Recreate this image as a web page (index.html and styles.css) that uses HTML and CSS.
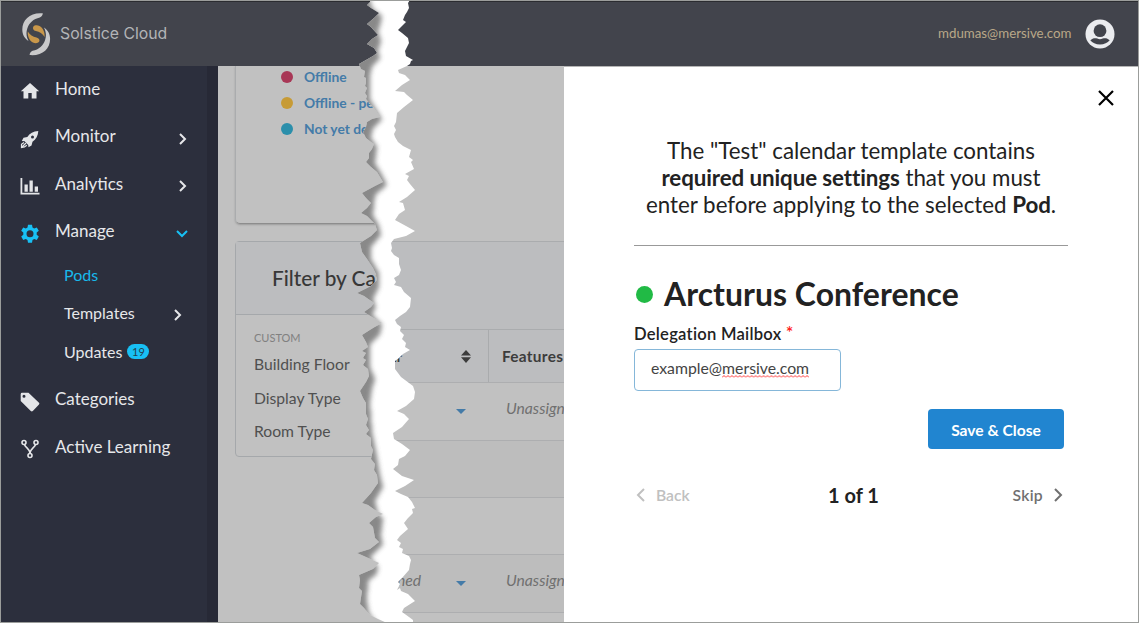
FILE: index.html
```html
<!DOCTYPE html>
<html lang="en">
<head>
<meta charset="utf-8">
<title>Solstice Cloud</title>
<link rel="stylesheet" href="styles.css">
</head>
<body>
<div class="app">
  <header class="topbar">
    <svg class="logo" width="29" height="43" viewBox="0 0 29 43">
      <defs>
        <g id="arm">
          <path d="M20.800.3C8.500-.9.300 6.500.300 16.500c0 5 2.200 9 6.200 11.500C4.300 24 3.900 19.500 5.300 15.500 7 10 11.500 6 17.800 4.600c1.800-.6 3-2.600 3-4.300z" fill="#c9c9ca"/>
          <path d="M5.800 18.500c2 3.300 5 5.200 8.700 5.900 2.600.5 3.600 2.600 2.600 4.300-1 1.500-3.800 1.900-6.200.8C7.500 27.800 5.300 23 5.800 18.500z" fill="#c8974a"/>
        </g>
      </defs>
      <use href="#arm"/>
      <use href="#arm" transform="rotate(180 14.200 21.200)"/>
    </svg>
    <span class="brand">Solstice Cloud</span>
    <span class="user">mdumas@mersive.com</span>
    <svg class="avatar" width="30" height="30" viewBox="0 0 30 30">
      <circle cx="15" cy="15" r="14.500" fill="#ebecef"/>
      <circle cx="15" cy="11.700" r="6.400" fill="#42444c"/>
      <path d="M5.300 21.300c3-3 5.800-2.300 9.700-1 3.900-1.300 6.700-2 9.700 1-2 2.700-5.500 4.200-9.700 4.200s-7.700-1.500-9.700-4.200z" fill="#42444c"/>
    </svg>
  </header>
  <div class="body">
    <nav class="sidebar">
      <a class="item"><svg class="ico" viewBox="0 0 20 20"><path d="M10 2L.8 10.200h2.700V17.500h4.800v-5.500h3.400v5.500h4.800v-7.300h2.700z"/></svg><span>Home</span></a>
      <a class="item"><svg class="ico" viewBox="0 0 20 20"><path fill-rule="evenodd" d="M18.300 2c-5 .2-8.600 2.300-11 6l-3.800.8L1.800 12l2.800.3 3.600 3.600.3 2.300 3-1.700 1-3.700c3.500-2.600 5.600-6 5.800-10.800zM12.500 6.500a1.500 1.500 0 1 1 0 3 1.500 1.500 0 0 1 0-3z"/><path d="M4 13.500l-2.500 1.800V18.500l3-.6 2.300-1.700M2 18l4-4" class="flame"/></svg><span>Monitor</span><svg class="chev" viewBox="0 0 12 12"><path d="M3 1l5 5-5 5"/></svg></a>
      <a class="item"><svg class="ico" viewBox="0 0 20 20"><path d="M.5 2H2.300v14.800H19.500v1.700H.5zM4.500 8.500H7.800V15.800H4.500zM9.500 4.500h3.300V15.800H9.500zM14.700 10.500H18V15.800h-3.300z"/></svg><span>Analytics</span><svg class="chev" viewBox="0 0 12 12"><path d="M3 1l5 5-5 5"/></svg></a>
      <a class="item"><svg class="ico gear" viewBox="0 0 20 20"><path fill-rule="evenodd" d="M8 .7h4l.5 2.700 1.700 1 2.600-1 2 3.400-2.100 1.800v2.200l2.100 1.800-2 3.400-2.600-1-1.700 1-.5 2.700H8l-.5-2.700-1.700-1-2.600 1-2-3.400 2.100-1.800V8.600L1.200 6.800l2-3.400 2.600 1 1.700-1zM10 6.200a3.500 3.500 0 1 0 0 7 3.500 3.500 0 0 0 0-7z"/></svg><span>Manage</span><svg class="chev open" viewBox="0 0 12 12"><path d="M1 3l5 5 5-5"/></svg></a>
      <div class="sub">
        <a class="subitem active"><span>Pods</span></a>
        <a class="subitem"><span>Templates</span><svg class="chev" viewBox="0 0 12 12"><path d="M3 1l5 5-5 5"/></svg></a>
        <a class="subitem"><span>Updates</span><b class="count">19</b></a>
      </div>
      <a class="item"><svg class="ico" viewBox="0 0 20 20"><path fill-rule="evenodd" d="M.7 2.200Q.7.800 2 .800H8.500L19 10.800q.8.800 0 1.600l-6.200 6.700q-1 .8-2 0L.7 9zM4 2.700a1.500 1.500 0 1 0 0 3 1.500 1.500 0 0 0 0-3z"/></svg><span>Categories</span></a>
      <a class="item"><svg class="ico line" viewBox="0 0 20 20"><circle cx="4" cy="3.500" r="2"/><circle cx="16" cy="3.500" r="2"/><circle cx="10" cy="16.500" r="2"/><path d="M4.500 5.500c.8 3.500 5.500 4 5.500 9M15.500 5.500c-.8 3.500-5.500 4-5.500 9"/></svg><span>Active Learning</span></a>
    </nav>
    <main class="page">
      <div class="left">
        <section class="legend">
          <p><i class="dot red"></i><span>Offline</span></p>
          <p><i class="dot amber"></i><span>Offline - pen</span></p>
          <p><i class="dot teal"></i><span>Not yet dep</span></p>
        </section>
        <section class="filter">
          <h2>Filter by Cat</h2>
          <small>CUSTOM</small>
          <p>Building Floor</p>
          <p>Display Type</p>
          <p>Room Type</p>
        </section>
      </div>
      <div class="table">
        <div class="toolbar"></div>
        <div class="row head"><div class="cell"><span>ar</span><svg width="10" height="13" viewBox="0 0 10 13"><path d="M5 0l5 5.500H0zM5 13L0 7.300h10z"/></svg></div><div class="feature">Features</div></div>
        <div class="row tall"><div class="cell"><i class="caret"></i></div><div class="feature">Unassign</div></div>
        <div class="row alt"></div>
        <div class="row"></div>
        <div class="row alt tall"><div class="cell"><em>ned</em><i class="caret"></i></div><div class="feature">Unassign</div></div>
        <div class="row last"></div>
      </div>
    </main>
    <aside class="panel">
      <svg class="close" width="16" height="16" viewBox="0 0 16 16"><path d="M1 1l14 14M15 1L1 15"/></svg>
      <p class="intro">The "Test" calendar template contains<br><b>required unique settings</b> that you must<br>enter before applying to the selected <b>Pod</b>.</p>
      <h1><i class="status"></i>Arcturus Conference</h1>
      <label>Delegation Mailbox <sup>*</sup></label>
      <div class="field">example@<span class="typo">mersive.com<svg width="88" height="3" viewBox="0 0 88 3"><defs><pattern id="wave" width="4" height="3" patternUnits="userSpaceOnUse"><path d="M0 2.500L2 .5 4 2.500" fill="none" stroke="#f33" stroke-width="1"/></pattern></defs><rect width="88" height="3" fill="url(#wave)"/></svg></span></div>
      <button>Save &amp; Close</button>
      <div class="pager">
        <span class="back"><svg width="10" height="14" viewBox="0 0 10 14"><path d="M8 1L2 7l6 6"/></svg>Back</span>
        <strong>1 of 1</strong>
        <span class="skip">Skip<svg width="10" height="14" viewBox="0 0 10 14"><path d="M2 1l6 6-6 6"/></svg></span>
      </div>
    </aside>
  </div>
  <svg class="tear" width="80" height="623" viewBox="350 0 80 623">
    <defs>
      <clipPath id="strip"><path id="strip-shape" d="M370 0L370 2 367 5 371 8 379 13 374 18 367 24 371 27 378 35 372 39 367 44 374 48 377 53 373 56 359 64 361 69 365 71 364 77 366 78 366 83 365 86 367 88 365 93 367 96 366 99 370 104 374 108 380 117 372 119 367 122 366 127 363 132 366 138 371 142 374 144 372 149 369 153 369 158 366 162 371 167 377 172 383 182 375 186 362 193 366 198 371 203 367 208 361 213 367 216 375 224 377 230 371 236 360 243 362 252 367 259 373 268 376 274 377 280 371 286 357 293 364 296 374 303 371 307 364 312 372 317 382 323 373 328 362 335 366 342 368 347 362 351 366 353 363 358 366 360 363 365 368 369 369 376 366 382 360 391 363 398 366 403 366 414 368 419 366 425 369 430 366 434 371 438 371 446 373 450 371 459 375 464 374 470 377 475 378 483 371 493 362 503 368 505 375 510 383 514 376 517 369 523 373 527 375 538 379 542 370 549 357 553 366 557 379 563 373 569 359 575 360 580 359 588 362 591 360 604 364 608 370 615 378 619 387 623 413 623 413 620 409 617 402 612 404 608 415 601 408 594 401 591 400 588 397 590 400 584 398 582 402 578 409 570 410 564 411 560 409 556 402 553 403 549 399 547 401 543 397 540 400 536 408 529 404 523 408 518 413 513 412 509 415 508 412 502 408 497 401 494 395 491 405 486 414 480 402 476 393 469 398 465 399 459 405 456 410 450 402 444 394 439 393 433 402 427 409 419 404 414 397 411 406 406 414 399 415 392 413 386 409 383 401 377 395 369 395 361 399 358 403 354 410 350 405 347 406 343 402 339 404 335 400 331 401 327 397 324 395 320 400 316 406 312 410 307 411 298 404 292 401 287 394 285 396 282 394 278 399 275 401 270 399 264 399 258 394 255 391 251 392 248 391 243 394 239 406 236 415 231 406 226 395 220 399 214 405 210 403 203 399 202 407 197 415 190 410 184 407 180 409 176 405 174 414 169 411 162 413 160 409 157 411 150 403 146 398 142 395 137 394 134 396 130 394 126 396 122 397 113 404 107 413 100 407 95 404 92 395 91 402 85 410 80 405 75 399 73 398 70 407 66 410 64 411 61 413 60 406 56 405 51 409 43 408 38 402 33 398 30 402 26 406 22 403 20 405 15 407 12 409 8 408 3 410 0z"/></clipPath>
      <filter id="soft" x="-50%" y="-5%" width="200%" height="110%"><feGaussianBlur stdDeviation="2.800"/></filter>
    </defs>
    <g clip-path="url(#strip)">
      <rect x="350" width="80" height="623" fill="#fff"/>
      <path class="shade" filter="url(#soft)" transform="translate(2 1)" d="M340 -2H368L370 7 380 15 379 22 376 30 379 40 376 50 378 57 370 66 368 74 368 98 375 110 380 118 371 127 369 137 375 146 373 162 380 174 385 184 373 194 371 214 377 225 379 234 369 246 369 258 377 272 377 286 371 298 374 306 370 314 380 324 378 333 368 344 368 366 373 378 370 388 368 402 370 430 374 450 378 474 381 486 373 500 376 512 381 518 379 534 381 544 368 556 376 566 375 573 366 580 365 600 367 612 376 624 340 624z"/>
    </g>
  </svg>
</div>
</body>
</html>
```
FILE: styles.css
```css
* { box-sizing: border-box; }
body { margin: 0; font-family: Lato, "Liberation Sans", sans-serif; }
p, h1, h2 { margin: 0; }
.app { position: relative; width: 1139px; height: 623px; border: 1px solid #9b9d9b; overflow: hidden; display: flex; flex-direction: column; }

.topbar { height: 65px; flex: none; background: #42444c; border-top: 1px solid #2b2c30; display: flex; align-items: center; padding: 0 23.500px 2px 21px; }
.logo { flex: none; margin-top: 2px; }
.brand { font: 15.800px Inter, sans-serif; color: #b3b4b7; margin-left: 9px; }
.user { margin-left: auto; font-size: 13.300px; color: #b9a888; font-weight: 400; }
.avatar { margin: 2px 0 0 13px; }

.body { flex: 1; min-height: 0; display: flex; }
.sidebar { width: 217px; flex: none; background: #2c2f3d; border-right: 11px solid #272936; }
.item { display: flex; align-items: center; height: 47.500px; padding: 0 19px 0 19.400px; font-size: 17px; color: #e6e7ea; }
.item span { margin-left: 14.600px; margin-top: -3px; }
.ico { width: 20px; height: 20px; fill: #e4e5e8; margin-top: 3px; }
.ico.gear { fill: #18c0f4; }
.ico .flame { fill: none; stroke: #e4e5e8; stroke-width: 1.200; }
.ico.line { fill: none; stroke: #e4e5e8; stroke-width: 1.600; }
.chev { width: 12px; height: 12px; margin: 3px -1px 0 auto; fill: none; stroke: #e6e7ea; stroke-width: 2; }
.chev.open { stroke: #18c0f4; margin-right: 0; }
.sub { margin-bottom: 5px; }
.subitem { display: flex; align-items: center; height: 38.500px; padding: 0 24px 0 63px; font-size: 16px; color: #e6e7ea; }
.subitem span { margin-top: -2px; }
.subitem.active { color: #18b9ec; }
.count { width: 22px; height: 15px; margin: -2px 0 0 5px; border-radius: 8px; background: #18c0f4; color: #23404f; font-size: 11px; line-height: 15px; font-weight: 400; text-align: center; }

.page { width: 346px; flex: none; background: #c1c1c1; display: flex; overflow: hidden; }
.left { width: 170px; flex: none; padding-left: 17px; }
.legend { display: flow-root; width: 150px; height: 158px; border: 1px solid #aaacae; border-top: 0; border-bottom-color: #8d8d8d; border-radius: 0 0 0 5px; box-shadow: 0 1px 2px #9b9b9b; padding-left: 45px; color: #447ba8; font-size: 13.800px; font-weight: 700; }
.legend p { display: flex; align-items: center; height: 26px; margin-top: -2px; margin-bottom: 2px; white-space: nowrap; }
.legend span { margin-top: -2px; }
.dot { width: 12px; height: 12px; border-radius: 50%; margin-right: 11px; }
.red { background: #a83756; }
.amber { background: #c79b36; }
.teal { background: #2b8fab; }
.filter { width: 150px; height: 216px; margin-top: 17px; border: 1px solid #a5a8ab; border-radius: 4px 0 0 4px; color: #505050; }
.filter h2 { height: 73px; line-height: 72px; padding-left: 36px; background: #bcbdbf; border-bottom: 1px solid #a5a8ab; font-size: 20.800px; font-weight: 500; color: #383838; white-space: nowrap; }
.filter small { display: block; padding-left: 18px; font-size: 11px; line-height: 15px; margin: 15px 0 3px; color: #808080; }
.filter p { padding-left: 18px; font-size: 15.700px; line-height: 33.500px; }

.table { width: 176px; flex: none; padding-top: 175px; }
.toolbar { height: 89px; background: #bcbdbf; border-top: 1px solid #aaacae; border-bottom: 1px solid #aaacae; }
.row { height: 57px; display: flex; border-bottom: 1px solid #adaeb0; }
.row.tall { height: 58px; }
.row.head { height: 53px; background: #bcbdbf; font-weight: 700; color: #3c3c3c; }
.row.alt { background: #bdbdbd; }
.cell { width: 101px; flex: none; display: flex; align-items: center; font-size: 15.700px; color: #707070; }
.head .cell { border-right: 1px solid #a9abad; padding-right: 17px; color: #3c3c3c; font-size: 14px; }
.head .cell span { width: 14px; text-align: right; }
.cell svg { margin-left: auto; fill: #3c3c3c; flex: none; }
.cell em { width: 33px; text-align: right; margin-top: -8px; }
.caret { margin: 0 23px 0 auto; border: 5px solid transparent; border-top-color: #447ba8; border-bottom: 0; }
.feature { padding: 16px 0 0 17px; font-size: 15.700px; font-style: italic; color: #707070; white-space: nowrap; }
.head .feature { padding: 17px 0 0 13px; font-style: normal; font-size: 15.400px; color: #3c3c3c; letter-spacing: .3px; }

.panel { width: 574px; flex: none; background: #fff; border-top: 1px solid #b5b5b5; padding: 0 70px; color: #222; position: relative; }
.close { position: absolute; top: 23px; right: 24px; stroke: #000; stroke-width: 2.200; }
.intro { padding-top: 70px; height: 179px; border-bottom: 1px solid #999; font-size: 22.350px; line-height: 27px; text-align: center; white-space: nowrap; }
.intro b { letter-spacing: -.1px; }
.panel h1 { display: flex; align-items: center; margin-top: 28px; height: 40px; font-size: 31.900px; font-weight: 700; letter-spacing: .05px; white-space: nowrap; }
.status { width: 17px; height: 17px; border-radius: 50%; background: #21ba45; margin: 0 11px 0 2px; }
.panel label { display: block; margin-top: 10px; height: 25px; line-height: 20px; font-size: 16.600px; font-weight: 600; letter-spacing: .25px; }
.panel sup { color: #f22; font-size: 18px; line-height: 0; vertical-align: 1px; }
.field { width: 207px; height: 42px; border: 1px solid #85b7d9; border-radius: 4px; padding: 0 16px; line-height: 36px; font-size: 15.800px; color: #444; }
.typo { position: relative; display: inline-block; }
.typo svg { position: absolute; left: 0; top: 25px; width: 100%; }
.panel button { display: block; width: 136px; height: 40px; margin: 18px 4px 0 auto; border: 0; border-radius: 4px; background: #2185d0; color: #fff; font: 700 15.600px/42px Lato, sans-serif; padding: 0; }
.pager { display: grid; grid-template-columns: 1fr auto 1fr; align-items: center; margin-top: 33px; padding: 0 5px 0 2px; height: 26px; font-size: 15.700px; }
.pager strong { font-size: 20px; margin: 0 -4px 0 4px; }
.pager svg { fill: none; stroke: currentColor; stroke-width: 2; }
.back, .skip { display: flex; align-items: center; gap: 10px; font-weight: 600; }
.back { color: #c0c0c0; }
.skip { color: #707070; justify-content: flex-end; letter-spacing: .3px; }

.tear { position: absolute; left: 349px; top: -1px; shape-rendering: crispEdges; }
.shade { fill: #6c6c6c; opacity: .8; }
```
